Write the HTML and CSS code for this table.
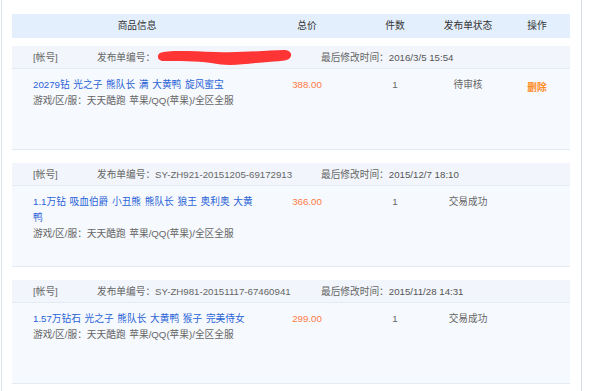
FILE: index.html
```html
<!DOCTYPE html>
<html lang="zh">
<head>
<meta charset="utf-8">
<title>发布单列表</title>
<link rel="stylesheet" href="styles.css">
</head>
<body>
<div class="frame">
  <div class="table">
    <div class="thead">
      <div class="c-prod">商品信息</div>
      <div class="c-price">总价</div>
      <div class="c-qty">件数</div>
      <div class="c-status">发布单状态</div>
      <div class="c-op">操作</div>
    </div>

    <div class="order">
      <div class="order-head">
        <span class="acc">[帐号]</span>
        <span class="no">发布单编号：<svg class="redact" width="136" height="17" viewBox="0 0 136 17"><path d="M4,4 C12,1 32,2 60,3 C90,4 112,1 128,1 C134,1 137,5 134,9 C131,13 118,12 100,14 C82,16 70,17 55,14 C40,12 22,12 8,12 C2,12 0,7 4,4 Z" fill="#ff3434"/></svg></span>
        <span class="time">最后修改时间：<b>2016/3/5 15:54</b></span>
      </div>
      <div class="order-body">
        <div class="c-prod">
          <div class="title">20279钻 光之子 熊队长 满 大黄鸭 旋风蜜宝</div>
          <div class="sub">游戏/区/服：天天酷跑 苹果/QQ(苹果)/全区全服</div>
        </div>
        <div class="c-price price">388.00</div>
        <div class="c-qty">1</div>
        <div class="c-status">待审核</div>
        <div class="c-op"><span class="del">删除</span></div>
      </div>
    </div>

    <div class="order">
      <div class="order-head">
        <span class="acc">[帐号]</span>
        <span class="no">发布单编号：SY-ZH921-20151205-69172913</span>
        <span class="time">最后修改时间：<b>2015/12/7 18:10</b></span>
      </div>
      <div class="order-body">
        <div class="c-prod">
          <div class="title">1.1万钻 吸血伯爵 小丑熊 熊队长 狼王 奥利奥 大黄鸭</div>
          <div class="sub">游戏/区/服：天天酷跑 苹果/QQ(苹果)/全区全服</div>
        </div>
        <div class="c-price price">366.00</div>
        <div class="c-qty">1</div>
        <div class="c-status">交易成功</div>
        <div class="c-op"></div>
      </div>
    </div>

    <div class="order">
      <div class="order-head">
        <span class="acc">[帐号]</span>
        <span class="no">发布单编号：SY-ZH981-20151117-67460941</span>
        <span class="time">最后修改时间：<b>2015/11/28 14:31</b></span>
      </div>
      <div class="order-body">
        <div class="c-prod">
          <div class="title">1.57万钻石 光之子 熊队长 大黄鸭 猴子 完美侍女</div>
          <div class="sub">游戏/区/服：天天酷跑 苹果/QQ(苹果)/全区全服</div>
        </div>
        <div class="c-price price">299.00</div>
        <div class="c-qty">1</div>
        <div class="c-status">交易成功</div>
        <div class="c-op"></div>
      </div>
    </div>
  </div>
</div>
</body>
</html>
```

FILE: styles.css
```css
html, body {
  margin: 0;
  padding: 0;
  background: #fff;
  overflow: hidden;
}
body {
  font-family: "Liberation Sans", "Noto Sans CJK SC", sans-serif;
  font-size: 9.7px;
  color: #555;
}
.frame {
  margin-left: 1px;
  width: 581px;
  height: 391px;
  border-left: 1px solid #dde3ea;
  border-right: 1px solid #d6dde6;
  padding-top: 14px;
  box-sizing: border-box;
}
.table {
  margin-left: 10px;
  width: 558px;
}
.thead,
.order-body {
  display: grid;
  grid-template-columns: 250px 90px 86px 60px 72px;
}
.thead {
  height: 24px;
  line-height: 24px;
  background: #e3effc;
  color: #333;
  text-align: center;
}
.c-op { padding-left: 6px; }
.order {
  margin-top: 8px;
  margin-bottom: 13px;
  border-bottom: 1px solid #e3eaf2;
}
.order-head {
  display: flex;
  align-items: center;
  height: 22px;
  background: #f2f6fc;
  border-bottom: 1px solid #e4ebf3;
  color: #666;
}
.acc {
  width: 64px;
  padding-left: 21px;
}
.no {
  display: flex;
  align-items: center;
  width: 224px;
  white-space: nowrap;
}
.redact {
  display: block;
  margin-left: 1px;
  margin-top: 1px;
}
.time b {
  font-weight: normal;
  color: #555;
}
.order-body {
  height: 80px;
  background: #f6f9fe;
  padding-top: 8px;
  box-sizing: border-box;
  line-height: 16px;
  text-align: center;
  color: #666;
}
.order-body .c-prod {
  text-align: left;
  padding-left: 21px;
  padding-right: 8px;
}
.title {
  color: #2a63d6;
  word-spacing: 1px;
}
.sub {
  color: #666;
  word-spacing: 1px;
}
.price {
  color: #ff7a45;
}
.del {
  display: inline-block;
  margin-top: 3px;
  color: #ff8a1e;
  font-weight: bold;
}
```
